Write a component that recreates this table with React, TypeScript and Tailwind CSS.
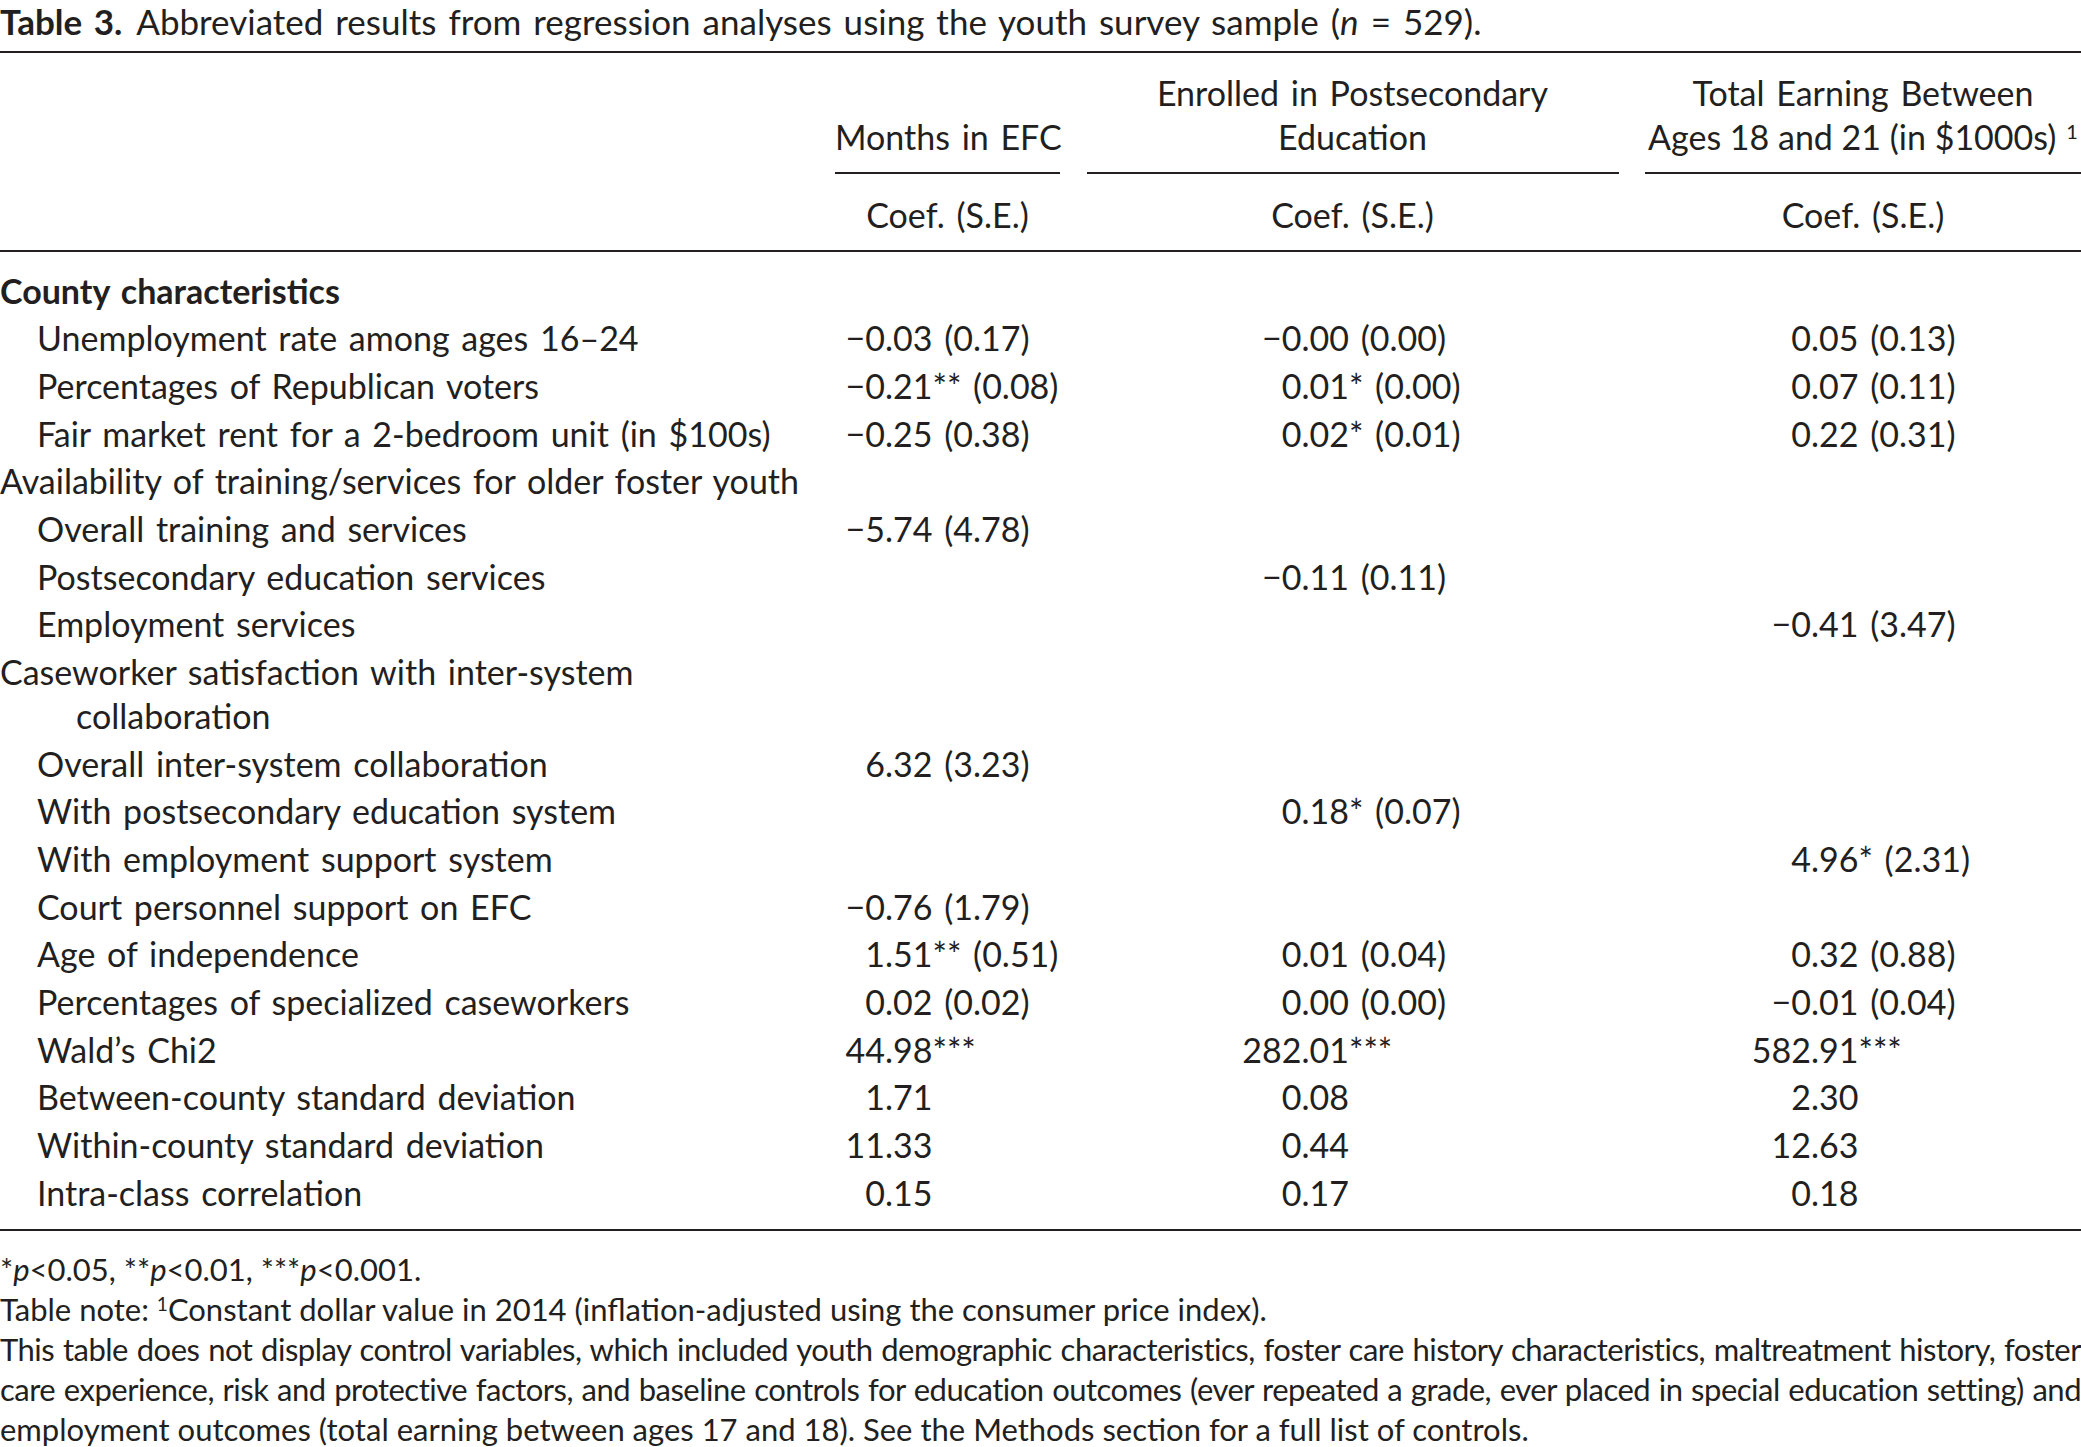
type Row = {
  label: string;
  second?: string;
  bold?: boolean;
  indent?: boolean;
  v?: string[];
};

const rows: Row[] = [
  { label: "County characteristics", bold: true },
  { label: "Unemployment rate among ages 16–24", indent: true, v: ["−0.03 (0.17)", "−0.00 (0.00)", "0.05 (0.13)"] },
  { label: "Percentages of Republican voters", indent: true, v: ["−0.21** (0.08)", "0.01* (0.00)", "0.07 (0.11)"] },
  { label: "Fair market rent for a 2-bedroom unit (in $100s)", indent: true, v: ["−0.25 (0.38)", "0.02* (0.01)", "0.22 (0.31)"] },
  { label: "Availability of training/services for older foster youth" },
  { label: "Overall training and services", indent: true, v: ["−5.74 (4.78)", "", ""] },
  { label: "Postsecondary education services", indent: true, v: ["", "−0.11 (0.11)", ""] },
  { label: "Employment services", indent: true, v: ["", "", "−0.41 (3.47)"] },
  { label: "Caseworker satisfaction with inter-system", second: "collaboration" },
  { label: "Overall inter-system collaboration", indent: true, v: ["6.32 (3.23)", "", ""] },
  { label: "With postsecondary education system", indent: true, v: ["", "0.18* (0.07)", ""] },
  { label: "With employment support system", indent: true, v: ["", "", "4.96* (2.31)"] },
  { label: "Court personnel support on EFC", indent: true, v: ["−0.76 (1.79)", "", ""] },
  { label: "Age of independence", indent: true, v: ["1.51** (0.51)", "0.01 (0.04)", "0.32 (0.88)"] },
  { label: "Percentages of specialized caseworkers", indent: true, v: ["0.02 (0.02)", "0.00 (0.00)", "−0.01 (0.04)"] },
  { label: "Wald’s Chi2", indent: true, v: ["44.98***", "282.01***", "582.91***"] },
  { label: "Between-county standard deviation", indent: true, v: ["1.71", "0.08", "2.30"] },
  { label: "Within-county standard deviation", indent: true, v: ["11.33", "0.44", "12.63"] },
  { label: "Intra-class correlation", indent: true, v: ["0.15", "0.17", "0.18"] },
];

// width from column start to the decimal point
const intWidth = ["w-[50px]", "w-[215px]", "w-[166px]"];

const grid = "grid grid-cols-[808.5px_225px_532px_436px] gap-x-[26.5px]";

function Value({ text, col }: { text: string; col: number }) {
  if (!text) return <div />;
  const i = text.indexOf(".");
  return (
    <div className="flex whitespace-nowrap">
      <span className={`${intWidth[col]} shrink-0 text-right`}>{text.slice(0, i)}</span>
      <span>{text.slice(i)}</span>
    </div>
  );
}

function Rule({ thin }: { thin?: boolean }) {
  return <div className={thin ? "h-[1.5px] bg-[#231f20]" : "h-[2px] bg-[#231f20]"} />;
}

export default function App() {
  return (
    <div className="h-screen w-full overflow-hidden bg-white font-['Lato',sans-serif] text-[#231f20]">
      <div className="h-[51px] whitespace-nowrap text-[35px] leading-[42px] [word-spacing:3px]">
        <span className="font-bold">Table 3.</span>
        <span className="ml-[14px]">
          Abbreviated results from regression analyses using the youth survey sample (<i>n</i> = 529).
        </span>
      </div>
      <Rule />

      <div className="text-[34px] [word-spacing:3px]">
        <div className={`${grid} pt-[18px]`}>
          <div />
          <div className="flex flex-col justify-end">
            <div className="text-center leading-[44px] whitespace-nowrap">Months in EFC</div>
            <div className="mt-[13px]">
              <Rule thin />
            </div>
          </div>
          <div className="flex flex-col justify-end">
            <div className="text-center leading-[44px]">
              <div>Enrolled in Postsecondary</div>
              <div>Education</div>
            </div>
            <div className="mt-[13px]">
              <Rule thin />
            </div>
          </div>
          <div className="flex flex-col justify-end">
            <div className="text-center leading-[44px]">
              <div>Total Earning Between</div>
              <div className="whitespace-nowrap [word-spacing:0px]">
                Ages 18 and 21 (in $1000s)
                <span className="relative -top-[11px] ml-[10px] text-[20px] leading-[0]">1</span>
              </div>
            </div>
            <div className="mt-[13px]">
              <Rule thin />
            </div>
          </div>
        </div>

        <div className={`${grid} pt-[24px] pb-[18px] leading-[34px]`}>
          <div />
          <div className="text-center">Coef. (S.E.)</div>
          <div className="text-center">Coef. (S.E.)</div>
          <div className="text-center">Coef. (S.E.)</div>
        </div>
        <Rule />

        <div className="pt-[15px] pb-[13px]">
          {rows.map((r, idx) =>
            r.second ? (
              <div key={idx} className={`${grid} py-[1.75px] leading-[44px]`}>
                <div>
                  <div className="whitespace-nowrap">{r.label}</div>
                  <div className="pl-[76px]">{r.second}</div>
                </div>
              </div>
            ) : (
              <div key={idx} className={`${grid} h-[47.7px] items-center leading-[47.7px]`}>
                <div className={`whitespace-nowrap ${r.indent ? "pl-[37px]" : ""} ${r.bold ? "font-bold" : ""}`}>
                  {r.label}
                </div>
                {(r.v ?? ["", "", ""]).map((t, c) => (
                  <Value key={c} text={t} col={c} />
                ))}
              </div>
            )
          )}
        </div>
      </div>
      <Rule />

      <div className="pt-[18px] text-[31px] leading-[40px]">
        <div>
          *<i>p</i>&lt;0.05, **<i>p</i>&lt;0.01, ***<i>p</i>&lt;0.001.
        </div>
        <div>
          Table note: <span className="relative -top-[10px] text-[19px] leading-[0]">1</span>Constant dollar value in
          2014 (inflation-adjusted using the consumer price index).
        </div>
        <div className="whitespace-nowrap text-justify tracking-[-0.5px] [text-align-last:justify] [word-spacing:-3px]">
          This table does not display control variables, which included youth demographic characteristics, foster
          care history characteristics, maltreatment history, foster
        </div>
        <div className="whitespace-nowrap text-justify tracking-[-0.5px] [text-align-last:justify] [word-spacing:-3px]">
          care experience, risk and protective factors, and baseline controls for education outcomes (ever repeated a
          grade, ever placed in special education setting) and
        </div>
        <div>
          employment outcomes (total earning between ages 17 and 18). See the Methods section for a full list of
          controls.
        </div>
      </div>
    </div>
  );
}
